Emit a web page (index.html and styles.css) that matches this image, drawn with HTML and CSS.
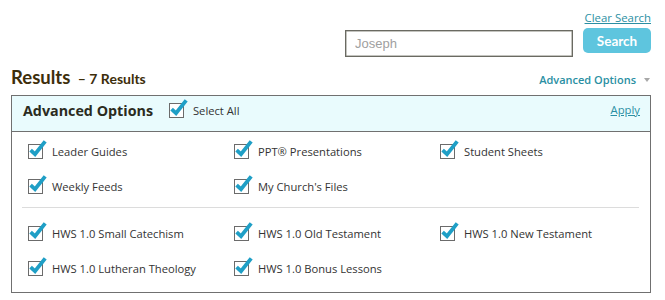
FILE: index.html
```html
<!DOCTYPE html>
<html>
<head>
<meta charset="utf-8">
<link rel="stylesheet" href="styles.css">
</head>
<body>
<div class="page">
  <div class="search-area">
    <a class="clear-link" href="#">Clear Search</a>
    <div class="search-row">
      <input class="search-input" type="text" placeholder="Joseph">
      <button class="search-btn">Search</button>
    </div>
  </div>

  <div class="results-bar">
    <div class="results-title">Results <span class="results-count">– 7 Results</span></div>
    <a class="adv-link" href="#">Advanced Options <span class="caret"></span></a>
  </div>

  <div class="panel">
    <div class="panel-head">
      <span class="panel-title">Advanced Options</span>
      <label class="check select-all">
        <svg class="cb" width="20" height="20" viewBox="0 0 20 20"><rect x="0.5" y="4.5" width="14" height="14" fill="#fff" stroke="#6b6b6b"/><path d="M2.6 10.2 L7 14.2 L17.2 1.4" fill="none" stroke="#1f9fc6" stroke-width="3.8"/></svg>
        <span>Select All</span>
      </label>
      <a class="apply-link" href="#">Apply</a>
    </div>
    <div class="group">
      <label class="check"><svg class="cb" width="20" height="20" viewBox="0 0 20 20"><rect x="0.5" y="4.5" width="14" height="14" fill="#fff" stroke="#6b6b6b"/><path d="M2.6 10.2 L7 14.2 L17.2 1.4" fill="none" stroke="#1f9fc6" stroke-width="3.8"/></svg><span>Leader Guides</span></label>
      <label class="check"><svg class="cb" width="20" height="20" viewBox="0 0 20 20"><rect x="0.5" y="4.5" width="14" height="14" fill="#fff" stroke="#6b6b6b"/><path d="M2.6 10.2 L7 14.2 L17.2 1.4" fill="none" stroke="#1f9fc6" stroke-width="3.8"/></svg><span>PPT® Presentations</span></label>
      <label class="check"><svg class="cb" width="20" height="20" viewBox="0 0 20 20"><rect x="0.5" y="4.5" width="14" height="14" fill="#fff" stroke="#6b6b6b"/><path d="M2.6 10.2 L7 14.2 L17.2 1.4" fill="none" stroke="#1f9fc6" stroke-width="3.8"/></svg><span>Student Sheets</span></label>
      <label class="check"><svg class="cb" width="20" height="20" viewBox="0 0 20 20"><rect x="0.5" y="4.5" width="14" height="14" fill="#fff" stroke="#6b6b6b"/><path d="M2.6 10.2 L7 14.2 L17.2 1.4" fill="none" stroke="#1f9fc6" stroke-width="3.8"/></svg><span>Weekly Feeds</span></label>
      <label class="check"><svg class="cb" width="20" height="20" viewBox="0 0 20 20"><rect x="0.5" y="4.5" width="14" height="14" fill="#fff" stroke="#6b6b6b"/><path d="M2.6 10.2 L7 14.2 L17.2 1.4" fill="none" stroke="#1f9fc6" stroke-width="3.8"/></svg><span>My Church's Files</span></label>
    </div>
    <div class="sep"></div>
    <div class="group group2">
      <label class="check"><svg class="cb" width="20" height="20" viewBox="0 0 20 20"><rect x="0.5" y="4.5" width="14" height="14" fill="#fff" stroke="#6b6b6b"/><path d="M2.6 10.2 L7 14.2 L17.2 1.4" fill="none" stroke="#1f9fc6" stroke-width="3.8"/></svg><span>HWS 1.0 Small Catechism</span></label>
      <label class="check"><svg class="cb" width="20" height="20" viewBox="0 0 20 20"><rect x="0.5" y="4.5" width="14" height="14" fill="#fff" stroke="#6b6b6b"/><path d="M2.6 10.2 L7 14.2 L17.2 1.4" fill="none" stroke="#1f9fc6" stroke-width="3.8"/></svg><span>HWS 1.0 Old Testament</span></label>
      <label class="check"><svg class="cb" width="20" height="20" viewBox="0 0 20 20"><rect x="0.5" y="4.5" width="14" height="14" fill="#fff" stroke="#6b6b6b"/><path d="M2.6 10.2 L7 14.2 L17.2 1.4" fill="none" stroke="#1f9fc6" stroke-width="3.8"/></svg><span>HWS 1.0 New Testament</span></label>
      <label class="check"><svg class="cb" width="20" height="20" viewBox="0 0 20 20"><rect x="0.5" y="4.5" width="14" height="14" fill="#fff" stroke="#6b6b6b"/><path d="M2.6 10.2 L7 14.2 L17.2 1.4" fill="none" stroke="#1f9fc6" stroke-width="3.8"/></svg><span>HWS 1.0 Lutheran Theology</span></label>
      <label class="check"><svg class="cb" width="20" height="20" viewBox="0 0 20 20"><rect x="0.5" y="4.5" width="14" height="14" fill="#fff" stroke="#6b6b6b"/><path d="M2.6 10.2 L7 14.2 L17.2 1.4" fill="none" stroke="#1f9fc6" stroke-width="3.8"/></svg><span>HWS 1.0 Bonus Lessons</span></label>
    </div>
  </div>
</div>
</body>
</html>
```

FILE: styles.css
```css
* { box-sizing: border-box; }
body {
  margin: 0;
  background: #fff;
  font-family: "Open Sans", "Noto Sans", sans-serif;
  color: #333;
}
.page {
  width: 665px;
  padding: 10px 14px 0 11px;
}
.search-area {
  display: flex;
  flex-direction: column;
  align-items: flex-end;
}
.clear-link {
  font-size: 11.4px;
  line-height: 16px;
  color: #2a8fa3;
  text-decoration: underline;
}
.search-row {
  display: flex;
  align-items: flex-start;
  gap: 10px;
  margin-top: 2px;
}
.search-input {
  width: 228px;
  height: 27px;
  margin-top: 2px;
  border: 1px solid #6a6a62;
  box-shadow: inset 0 0 0 0.5px #8a8a80;
  padding: 0 9px;
  font-family: "Liberation Sans", Arial, sans-serif;
  font-size: 13px;
  color: #333;
  outline: none;
}
.search-input::placeholder { color: #a0a0a0; }
.search-btn {
  width: 68px;
  height: 25px;
  border: none;
  border-radius: 5px;
  background: #5ec5de;
  color: #fff;
  font-family: Lato, sans-serif;
  font-weight: 700;
  font-size: 13.5px;
  padding: 0;
}
.results-bar {
  display: flex;
  justify-content: space-between;
  align-items: baseline;
  margin-top: 9px;
  height: 29px;
}
.results-title {
  font-family: Lato, sans-serif;
  font-weight: 700;
  font-size: 18.5px;
  color: #3d2e0b;
}
.results-count {
  font-size: 14px;
  margin-left: 3px;
}
.adv-link {
  font-size: 11px;
  font-weight: 600;
  color: #2a8fa3;
  text-decoration: none;
  display: inline-flex;
  align-items: center;
}
.caret {
  display: inline-block;
  margin-left: 8px;
  margin-right: 1px;
  border-left: 3.5px solid transparent;
  border-right: 3.5px solid transparent;
  border-top: 4px solid #a8a8a8;
}
.panel {
  border: 1px solid #707070;
}
.panel-head {
  display: flex;
  align-items: center;
  height: 36px;
  padding: 0 10px 6px 11px;
  background: #e9fbfd;
  border-bottom: 1px solid #707070;
}
.panel-title {
  font-weight: 700;
  font-size: 14.3px;
  color: #2b2b1e;
}
.select-all { margin-left: 16px; }
.apply-link {
  margin-left: auto;
  font-size: 11.3px;
  color: #2a8fa3;
  text-decoration: underline;
  margin-top: -2px;
}
.check {
  display: flex;
  align-items: center;
  gap: 4px;
  font-size: 11.2px;
  color: #333;
  height: 35px;
}
.cb { flex: none; margin-top: -4px; }
.group {
  display: grid;
  grid-template-columns: 206px 206px 206px;
  padding: 2px 0 0 16px;
}
.group2 { padding: 8px 0 6px 16px; }
.sep {
  height: 1px;
  background: #dcdcdc;
  margin: 3px 11px 0 10px;
}
```
